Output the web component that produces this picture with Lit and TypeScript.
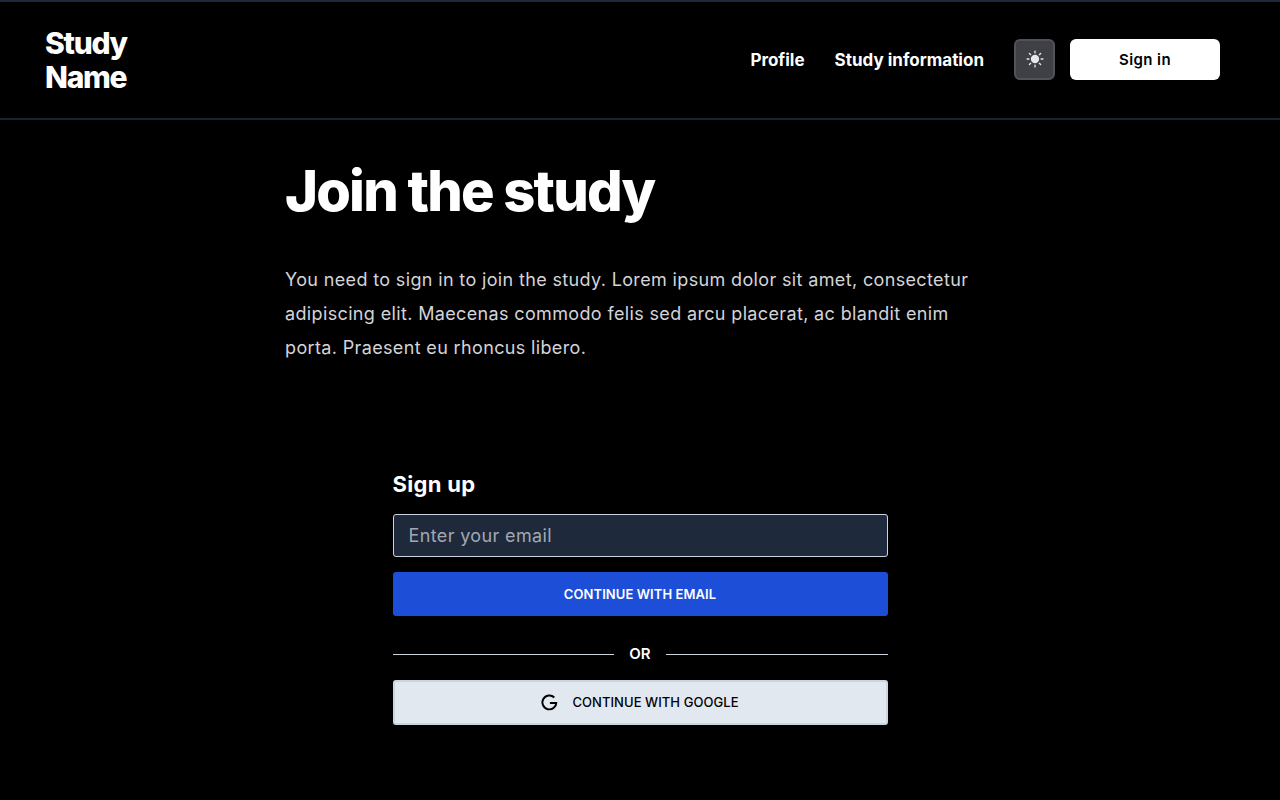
import { LitElement, html, css } from "lit";
import { customElement } from "lit/decorators.js";

@customElement("app-root")
export class AppRoot extends LitElement {
  static styles = css`
    :host { display: block; background: #000; color: #fff; font-family: Inter, "Liberation Sans", sans-serif; overflow: hidden; height: 800px; }
    header { box-sizing: border-box; height: 120px; border-top: 2px solid #1e293b; border-bottom: 2px solid #1a2335; display: flex; align-items: center; justify-content: space-between; padding: 0 60px 2px 45px; }
    .brand { font-size: 30px; line-height: 34px; font-weight: 800; width: 110px; letter-spacing: -1.3px; margin-top: 2px; }
    nav { display: flex; align-items: center; }
    nav a { font-size: 17px; font-weight: 700; line-height: 24px; margin-right: 30px; color: #fff; padding-top: 2px; }
    .theme { box-sizing: border-box; width: 41px; height: 41px; border-radius: 6px; background: #3f3f46; border: 2px solid #52525b; display: flex; align-items: center; justify-content: center; margin-right: 15px; }
    .signin { box-sizing: border-box; width: 150px; height: 41px; border-radius: 6px; background: #fff; color: #000; font-size: 15px; font-weight: 600; letter-spacing: 0.4px; display: flex; align-items: center; justify-content: center; }
    main { width: 710px; margin: 0 auto; box-sizing: border-box; }
    h1 { margin: 0; padding-top: 38px; font-size: 56px; line-height: 66px; font-weight: 800; letter-spacing: -1.8px; }
    p { margin: 39px 0 0; font-size: 18px; line-height: 34px; color: #d4d4d8; width: 700px; letter-spacing: 0.355px; }
    .form { width: 495px; margin: 105px auto 0; display: flex; flex-direction: column; }
    h2 { margin: 0; font-size: 22px; line-height: 28px; font-weight: 700; letter-spacing: 0.3px; }
    .input { box-sizing: border-box; margin-top: 16px; height: 43px; border: 1px solid #cbd5e1; border-radius: 3px; background: #1e293b; color: #a1a8b3; font-size: 18px; letter-spacing: 0.37px; display: flex; align-items: center; padding-left: 15px; }
    .primary { margin-top: 15px; height: 44px; border-radius: 3px; background: #1d4ed8; font-size: 13px; letter-spacing: 0.08px; font-weight: 600; display: flex; align-items: center; justify-content: center; }
    .or { margin-top: 16px; height: 44px; display: flex; align-items: center; gap: 15px; font-size: 15px; font-weight: 600; }
    .or span { position: relative; top: -1px; }
    .or i { flex: 1; height: 1px; background: #cbd5e1; }
    .google { box-sizing: border-box; margin-top: 4px; height: 45px; padding-bottom: 2px; border-radius: 3px; background: #e2e8f0; border: 2px solid #cbd5e1; color: #000; font-size: 13px; letter-spacing: 0.06px; font-weight: 500; display: flex; align-items: center; justify-content: center; gap: 14px; }
    .google svg { position: relative; top: 1px; }
  `;
  render() {
    return html`
      <header>
        <div class="brand">Study Name</div>
        <nav>
          <a>Profile</a><a>Study information</a>
          <div class="theme">
            <svg width="20" height="20" viewBox="0 0 24 24" fill="#e5e7eb" stroke="#e5e7eb" stroke-width="1.6" stroke-linecap="round"><circle cx="12" cy="12" r="4.2"/><path d="M12 2.5v2.2M12 19.3v2.2M2.5 12h2.2M19.3 12h2.2M5.3 5.3l1.5 1.5M17.2 17.2l1.5 1.5M5.3 18.7l1.5-1.5M17.2 6.8l1.5-1.5" fill="none"/></svg>
          </div>
          <div class="signin">Sign in</div>
        </nav>
      </header>
      <main>
        <h1>Join the study</h1>
        <p>You need to sign in to join the study. Lorem ipsum dolor sit amet, consectetur adipiscing elit. Maecenas commodo felis sed arcu placerat, ac blandit enim porta. Praesent eu rhoncus libero.</p>
        <div class="form">
          <h2>Sign up</h2>
          <div class="input">Enter your email</div>
          <div class="primary">CONTINUE WITH EMAIL</div>
          <div class="or"><i></i><span>OR</span><i></i></div>
          <div class="google">
            <svg width="17" height="17" viewBox="0 0 24 24" fill="none" stroke="#000" stroke-width="2.8"><path d="M21.5 12.6H12.6M21.6 11.4A9.8 9.8 0 1 1 18.8 5"/></svg>
            <span>CONTINUE WITH GOOGLE</span>
          </div>
        </div>
      </main>
    `;
  }
}
